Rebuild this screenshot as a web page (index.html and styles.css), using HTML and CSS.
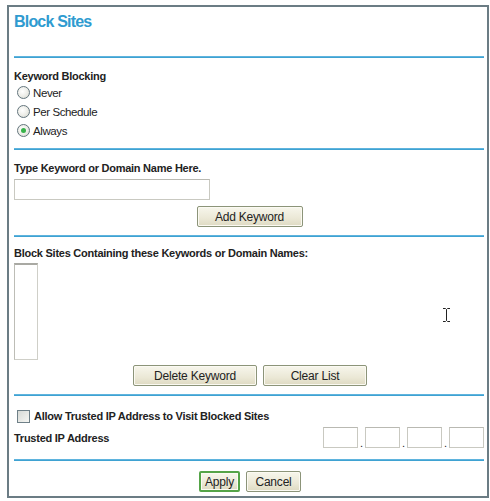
FILE: index.html
```html
<!DOCTYPE html>
<html>
<head>
<meta charset="utf-8">
<link rel="stylesheet" href="styles.css">
</head>
<body>
<div class="frame">
  <div class="sec-title"><h1 class="title">Block Sites</h1></div>
  <div class="rule"></div>

  <div class="sec-kw">
    <div class="label">Keyword Blocking</div>
    <div class="radio-row"><span class="radio"></span><span>Never</span></div>
    <div class="radio-row"><span class="radio"></span><span>Per Schedule</span></div>
    <div class="radio-row"><span class="radio checked"></span><span>Always</span></div>
  </div>
  <div class="rule"></div>

  <div class="sec-type">
    <div class="label">Type Keyword or Domain Name Here.</div>
    <div class="text-input wide"></div>
    <div class="btn-row"><button class="btn btn-add">Add Keyword</button></div>
  </div>
  <div class="rule"></div>

  <div class="sec-list">
    <div class="label">Block Sites Containing these Keywords or Domain Names:</div>
    <div class="listbox"></div>
    <div class="btn-row gap"><button class="btn btn-del">Delete Keyword</button><button class="btn btn-clear">Clear List</button></div>
    <svg class="ibeam" width="9" height="16" viewBox="0 0 9 16"><path d="M1 1.5h2.5l1 1 1-1H8M4.5 2.5v11M1 14.5h2.5l1-1 1 1H8" fill="none" stroke="#222" stroke-width="1"/></svg>
  </div>
  <div class="rule"></div>

  <div class="sec-trust">
    <div class="check-row"><span class="checkbox"></span><span class="label">Allow Trusted IP Address to Visit Blocked Sites</span></div>
    <div class="ip-row">
      <span class="label">Trusted IP Address</span>
      <div class="ip">
        <span class="text-input oct"></span><span class="dot">.</span>
        <span class="text-input oct"></span><span class="dot">.</span>
        <span class="text-input oct"></span><span class="dot">.</span>
        <span class="text-input oct"></span>
      </div>
    </div>
  </div>
  <div class="rule"></div>

  <div class="btn-row gap sec-apply"><button class="btn btn-apply">Apply</button><button class="btn btn-cancel">Cancel</button></div>
</div>
</body>
</html>
```

FILE: styles.css
```css
* { box-sizing: border-box; }
html, body { margin: 0; padding: 0; background: #fff; }
body { font-family: "Liberation Sans", Arial, sans-serif; color: #222; font-size: 11px; }

.frame {
  margin: 5px 0 0 7px;
  width: 482px;
  height: 493px;
  border: 2px solid #6b7c84;
  padding: 0 3px 0 5px;
}

.sec-title { height: 49px; padding-top: 6px; }
.title { margin: 0; font-size: 16px; line-height: 18px; font-weight: bold; color: #2f9bd0; letter-spacing: -0.8px; }

.rule { height: 2px; background: #3fa2d2; border-top: 1px solid #5fb4de; }

.label { font-weight: bold; line-height: 14px; font-size: 11px; letter-spacing: -0.25px; }

.sec-kw { padding-top: 11px; height: 90px; }
.radio-row { height: 19px; display: flex; align-items: center; padding-left: 3px; gap: 3px; font-size: 11.5px; letter-spacing: -0.4px; }
.radio {
  width: 13px; height: 13px; border-radius: 50%;
  border: 1px solid #63757d;
  background: radial-gradient(circle at 40% 40%, #fff 0, #eeeee9 50%, #d2d5cd 100%);
  position: relative;
}
.radio.checked::after {
  content: ""; position: absolute; left: 3px; top: 3px; width: 5px; height: 5px; border-radius: 50%;
  background: #38b24a;
}

.sec-type { padding-top: 11px; height: 85px; }
.text-input { display: block; border: 1px solid #c9c9c1; border-top-color: #b9b9b2; background: #fff; height: 21px; }
.wide { width: 196px; margin-top: 4px; }
.btn-row { display: flex; justify-content: center; }
.btn-row.gap { gap: 6px; }
.sec-type .btn-row { margin-top: 6px; padding-left: 1px; }

.btn {
  font-family: "Liberation Sans", Arial, sans-serif; font-size: 12px; color: #222;
  height: 21px; padding: 0; letter-spacing: -0.2px;
  border: 1px solid #8c9479; border-radius: 2px;
  background: linear-gradient(#f7f6ec, #ebe8d6 60%, #dedac2);
  box-shadow: inset 0 0 0 1px #fbfaf2;
}
.btn-add { width: 106px; }
.btn-del { width: 124px; }
.btn-clear { width: 104px; }
.btn-apply { width: 41px; border: 2px solid #55a448; }
.btn-cancel { width: 55px; }

.sec-list { padding-top: 9px; height: 157px; position: relative; }
.listbox { width: 24px; height: 97px; margin-top: 3px; border: 1px solid #cfcfc8; border-top: 2px solid #a9a9a3; border-left-color: #bdbdb6; }
.sec-list .btn-row { margin-top: 5px; padding-left: 2px; }
.ibeam { position: absolute; left: 428px; top: 70px; }

.sec-trust { padding-top: 13px; height: 63px; }
.check-row { display: flex; align-items: center; gap: 4px; padding-left: 3px; height: 14px; }
.checkbox { width: 13px; height: 13px; border: 1px solid #6f8088; background: linear-gradient(135deg, #d7dad6, #f6f6f3); }
.ip-row { display: flex; justify-content: space-between; align-items: center; margin-top: 3px; height: 23px; }
.ip { display: flex; align-items: flex-end; }
.oct { width: 35px; height: 21px; }
.dot { width: 7px; text-align: center; font-size: 11px; line-height: 10px; }

.sec-apply { padding-top: 10px; padding-left: 2px; }
```
